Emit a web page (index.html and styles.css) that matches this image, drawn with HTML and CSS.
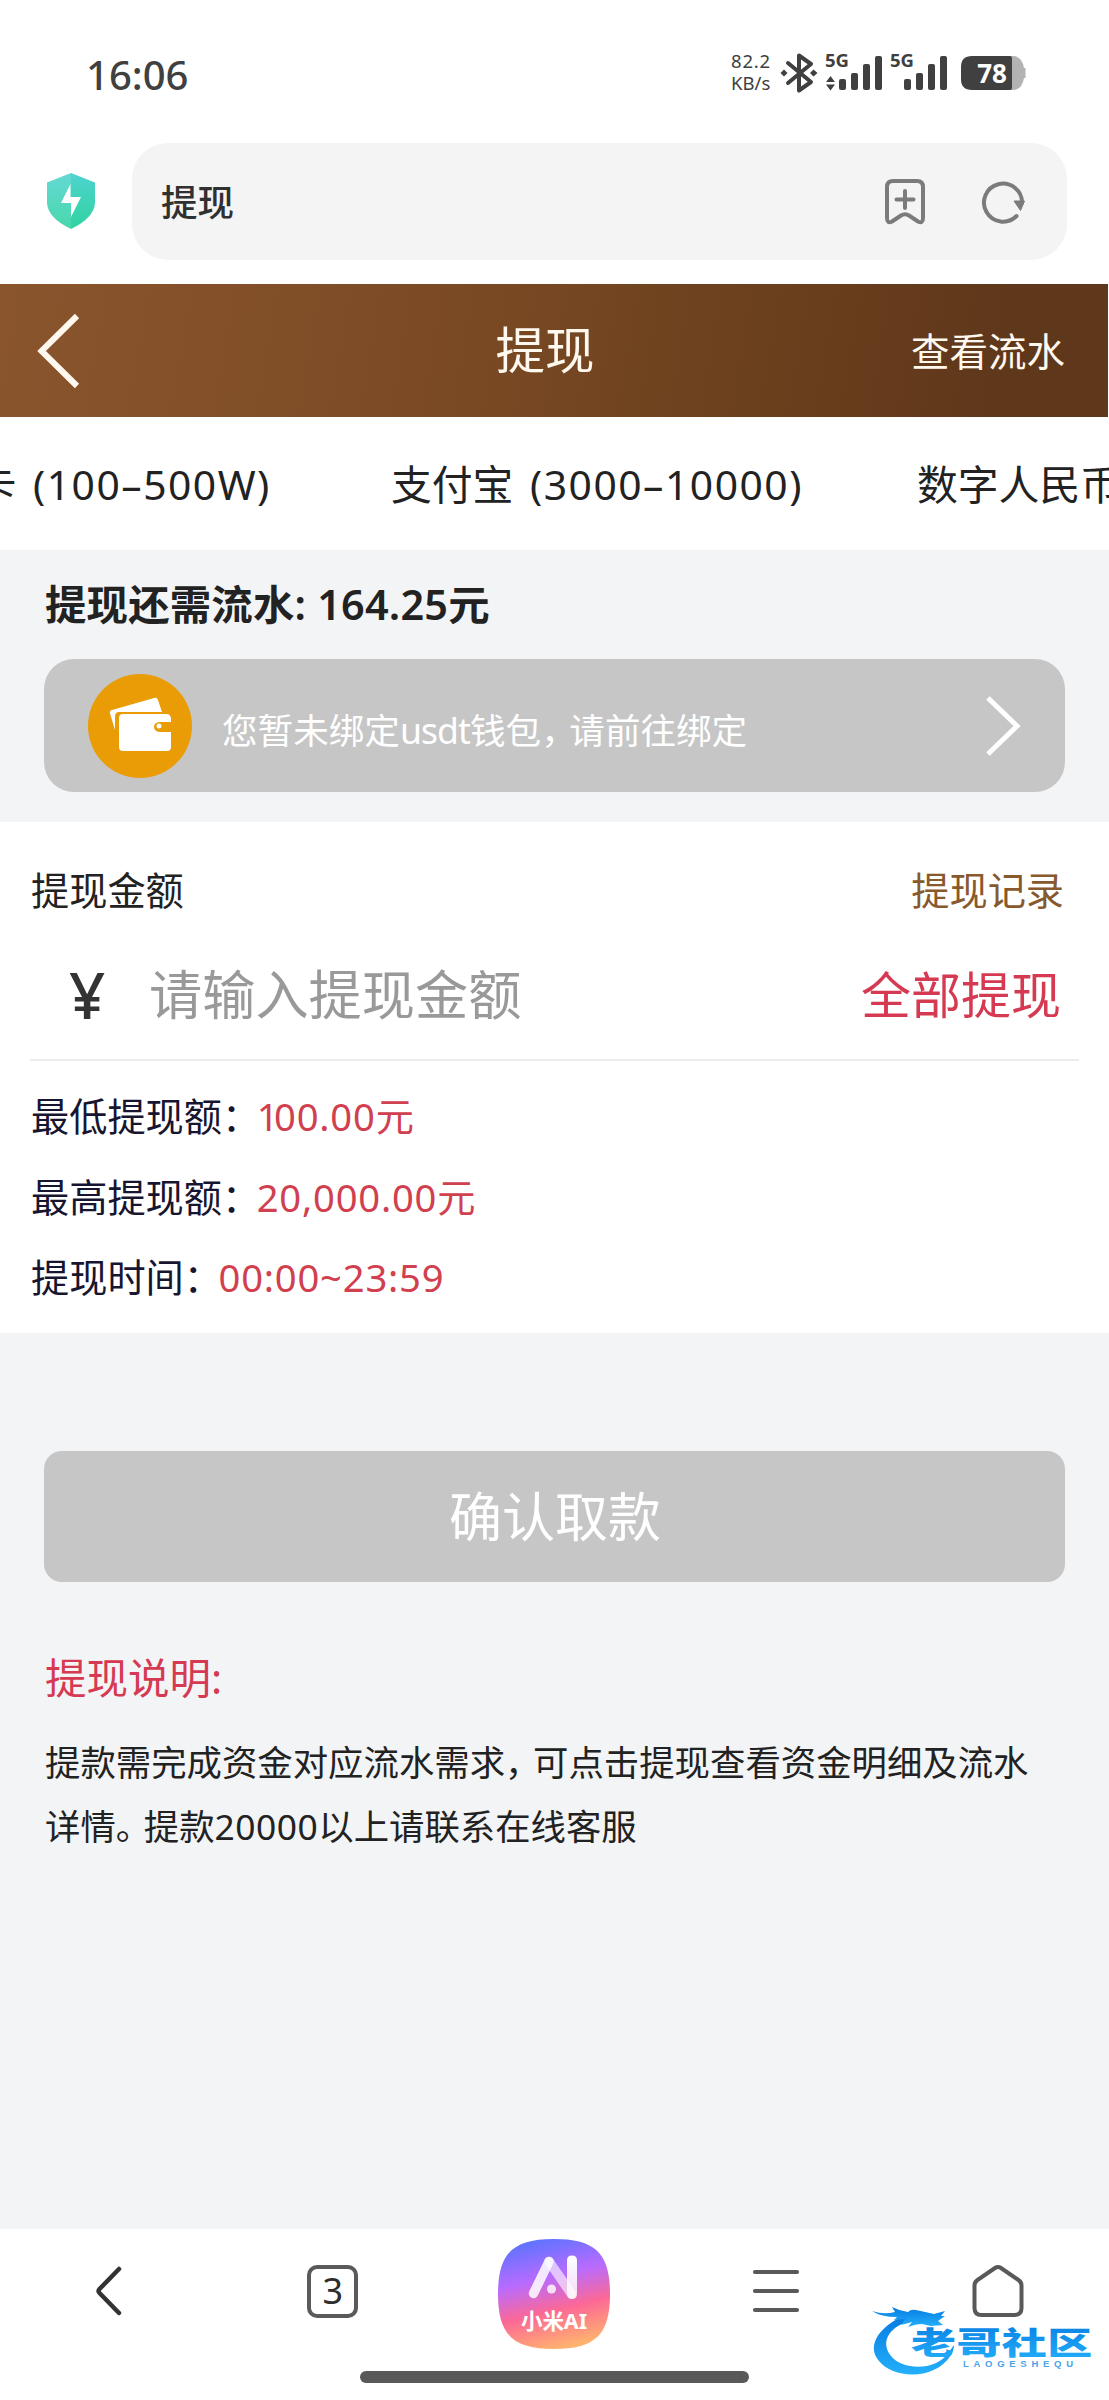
FILE: index.html
```html
<!DOCTYPE html>
<html lang="zh-CN">
<head>
<meta charset="utf-8">
<title>提现</title>
<link rel="stylesheet" href="styles.css">
</head>
<body>
<div class="phone">
  <div class="status">
    <span class="clock">16:06</span>
    <div class="indicators">
      <div class="speed"><span>82.2</span><span>KB/s</span></div>
      <svg class="status-icons" viewBox="0 0 248 44" width="248" height="44">
        <g fill="none" stroke="#404040" stroke-width="4" stroke-linejoin="round" stroke-linecap="round">
          <path d="M8 12 31 31 19 39.500V4.500L31 13 8 32"/>
        </g>
        <g fill="#404040">
          <path d="M0.500 22 4 18.500 7.500 22 4 25.500zM30 22l3.500-3.500L37.500 22l-4 3.500z"/>
          <text class="net" x="45" y="16">5G</text>
          <path d="M50.500 25 55 31H46zM46 33.500h9L50.500 39.500z"/>
          <rect x="59" y="28" width="7" height="11" rx="2"/><rect x="71" y="22" width="7" height="17" rx="2"/><rect x="83" y="13" width="7" height="26" rx="2"/><rect x="95" y="5" width="7" height="34" rx="2"/>
          <text class="net" x="110" y="16">5G</text>
          <rect x="124" y="28" width="7" height="11" rx="2"/><rect x="136" y="22" width="7" height="17" rx="2"/><rect x="148" y="13" width="7" height="26" rx="2"/><rect x="160" y="5" width="7" height="34" rx="2"/>
        </g>
        <path fill="#b3b3b3" d="M228 5h5q9 0 11 12h1.500v10H244q-2 12-11 12h-5z"/>
        <path fill="#404040" d="M192 5h38q2 0 2 2v30q0 2-2 2h-38q-11 0-11-11V16q0-11 11-11z"/>
        <text class="charge" x="212" y="31.500" text-anchor="middle">78</text>
      </svg>
    </div>
  </div>

  <div class="browser">
    <svg class="shield" viewBox="0 0 50 58" width="50" height="58">
      <defs><linearGradient id="sh" x1="0" y1="0" x2="0" y2="1"><stop offset="0" stop-color="#4fd3cf"/><stop offset="1" stop-color="#2fd3a0"/></linearGradient></defs>
      <path fill="url(#sh)" d="M25 1 49 10.500V31Q48 46 25 57 2 46 1 31V10.500z"/>
      <path fill="#fff" fill-opacity=".12" d="M25 1 1 10.500V31Q2 46 25 57z"/>
      <path fill="#fff" d="M24.500 12 15 31h10v14l10-20H24.500z"/>
    </svg>
    <div class="address">
      <span class="address-title">提现</span>
      <svg viewBox="0 0 42 48" width="42" height="48" fill="none" stroke="#7b7b7b" stroke-width="4" stroke-linecap="round" stroke-linejoin="round">
        <path d="M9 3h24q6 0 6 6v31q0 6-5 3.500l-9-6q-4-2.500-8 0l-9 6Q3 46 3 40V9q0-6 6-6z"/><path d="M21 13v17M12.500 21.500h17"/>
      </svg>
      <svg viewBox="0 0 44 44" width="44" height="44">
        <path d="M35.500 36A19 19 0 1 1 41 23" fill="none" stroke="#7b7b7b" stroke-width="4" stroke-linecap="round"/>
        <path d="M33 21h10.500L39.500 30.500z" fill="#7b7b7b" stroke="#7b7b7b" stroke-linejoin="round"/>
      </svg>
    </div>
  </div>

  <header class="topbar">
    <svg class="back" viewBox="0 0 48 80" width="48" height="80"><path d="M42 5 6.500 40 42 75" fill="none" stroke="#fff8ef" stroke-width="6"/></svg>
    <h1>提现</h1>
    <a class="flow">查看流水</a>
  </header>

  <nav class="tabs">
    <span class="tab">银行卡 <i class="num">(100–500W)</i></span>
    <span class="tab">支付宝 <i class="num">(3000–10000)</i></span>
    <span class="tab">数字人民币</span>
  </nav>

  <main>
    <section class="wallet">
      <p class="need">提现还需流水: 164.25元</p>
      <div class="bind">
        <svg viewBox="0 0 104 104" width="104" height="104">
          <circle cx="52" cy="52" r="52" fill="#e99c05"/>
          <path fill="#fff" d="M22 39.500Q21 37 24 36L66 24q3-1 4 2l4 12H31q-4 0-4 5v13z"/>
          <path fill="#fff" d="M35 40H78q5 0 5 5v3H73q-7 0-7 5t7 5H83V73q0 4-4 4H35q-4 0-4-4V44q0-4 4-4z"/>
          <circle cx="71" cy="52" r="2.500" fill="#fff"/>
        </svg>
        <span class="bind-text">您暂未绑定<i class="usdt">usdt</i>钱包<i class="comma">，</i>请前往绑定</span>
        <svg viewBox="0 0 40 64" width="40" height="64"><path d="M5 4 34 32 5 60" fill="none" stroke="#fff" stroke-width="5"/></svg>
      </div>
    </section>

    <section class="amount">
      <div class="amount-head"><span>提现金额</span><a>提现记录</a></div>
      <div class="amount-input">
        <span class="yen">¥</span>
        <span class="placeholder">请输入提现金额</span>
        <a class="all">全部提现</a>
      </div>
      <dl class="limits">
        <div><dt>最低提现额<i class="colon">：</i></dt><dd><i class="one">1</i>00.00元</dd></div>
        <div><dt>最高提现额<i class="colon">：</i></dt><dd>20,000.00元</dd></div>
        <div><dt>提现时间<i class="colon">：</i></dt><dd>00:00~23:59</dd></div>
      </dl>
    </section>

    <button class="confirm">确认取款</button>

    <section class="notes">
      <h2>提现说明:</h2>
      <p>提款需完成资金对应流水需求<i class="comma">，</i>可点击提现查看资金明细及流水<br>详情<i class="comma">。</i>提款<i class="sum">20000</i>以上请联系在线客服</p>
    </section>
  </main>

  <footer class="bottom">
    <div class="nav">
      <span><svg viewBox="0 0 30 52" width="30" height="52"><path d="M23 4 3.500 24q-2 2 0 4L23 48" fill="none" stroke="#333" stroke-width="4.500" stroke-linecap="round"/></svg></span>
      <span><b class="count">3</b></span>
      <span>
        <svg viewBox="0 0 112 112" width="112" height="112">
          <defs>
            <linearGradient id="ai" x1=".3" y1="0" x2=".55" y2="1"><stop offset="0" stop-color="#5a74ff"/><stop offset=".36" stop-color="#b86bff"/><stop offset=".66" stop-color="#fc6896"/><stop offset="1" stop-color="#ffb36e"/></linearGradient>
            <linearGradient id="leg" x1="0" y1="0" x2="0" y2="1"><stop offset="0" stop-color="#fff"/><stop offset="1" stop-color="#fff" stop-opacity=".75"/></linearGradient>
          </defs>
          <path fill="url(#ai)" d="M56 1C97 1 112 15 112 56S97 111 56 111 0 97 0 56 15 1 56 1z"/>
          <path d="M35.500 55.500 51 23.500" stroke="#fff" stroke-opacity=".85" stroke-width="9.500" stroke-linecap="round"/>
          <path d="M51 23.500 73.500 56" stroke="#fff" stroke-opacity=".6" stroke-width="9.500" stroke-linecap="round"/>
          <path d="M69 22.500q0-5 5-5t5 5V56q0 5-5 5t-5-5z" fill="url(#leg)"/>
          <circle cx="53.500" cy="51" r="4.500" fill="#fff" fill-opacity=".8"/>
          <text class="ai-name" x="56" y="91" text-anchor="middle" textLength="66">小米AI</text>
        </svg>
      </span>
      <span><svg viewBox="0 0 48 46" width="48" height="46"><path d="M3 4h42M3 23h42M3 42h42" fill="none" stroke="#595959" stroke-width="4.200" stroke-linecap="round"/></svg></span>
      <span><svg viewBox="0 0 52 54" width="52" height="54"><path d="M23 4q3-2 6 0L46.500 16q3 2 3 5.500V44q0 7-7 7H9.500q-7 0-7-7V21.500q0-3.500 3-5.500z" fill="none" stroke="#595959" stroke-width="4"/></svg></span>
    </div>
    <div class="pill"></div>
    <svg class="watermark" viewBox="0 0 224 76" width="224" height="76">
      <defs><linearGradient id="wm" x1="0" y1="0" x2="0" y2="1"><stop offset="0" stop-color="#067be2"/><stop offset="1" stop-color="#24b0fa"/></linearGradient></defs>
      <path fill="url(#wm)" d="M30 14C6 26-4 44 8 58c14 18 56 20 72-6 2-4 3-7 3-10l-5 7C66 68 32 68 20 53 8 38 20 22 42 17z"/>
      <path fill="url(#wm)" d="M1 8q12 4 23 1l-3-5q8 4 16 5 3-3 8-2l18 4 11-3-4 5h4l-7 5 5 4-12 1-9-2q-6 0-14 3l4-5-11 3 4-6-11 1 3-3Q10 14 1 8z"/>
      <text class="wm-cn" fill="url(#wm)" transform="translate(40 51) scale(1.45 1)" textLength="125">老哥社区</text>
      <text class="wm-en" x="92" y="64" textLength="110">LAOGESHEQU</text>
    </svg>
  </footer>
</div>
</body>
</html>
```
FILE: styles.css
```css
* { box-sizing: border-box; }
body {
  margin: 0;
  background: #fff;
  color: #222;
  font-family: "Noto Sans", "Noto Sans CJK SC", sans-serif;
}
i { font-style: normal; }
svg { display: block; flex: none; overflow: visible; }
h1, h2, p, dl, dd { margin: 0; font-weight: 400; }

.phone {
  width: 1109px;
  height: 2400px;
  display: flex;
  flex-direction: column;
  overflow: hidden;
}

.status {
  height: 143px;
  padding: 6px 81px 0 86px;
  display: flex;
  justify-content: space-between;
  color: #404040;
}
.clock {
  height: 137px;
  line-height: 137px;
  font-size: 40px;
  font-weight: 500;
}
.indicators { display: flex; padding-top: 45px; gap: 9px; }
.speed {
  display: flex;
  flex-direction: column;
  margin-top: -1px;
  font-size: 18.500px;
  line-height: 22px;
}
.speed span:first-child { letter-spacing: .8px; }
.net { font: 700 18.500px "Noto Sans", sans-serif; }
.charge { font: 700 26px "Noto Sans", sans-serif; fill: #fff; }

.browser {
  height: 141px;
  padding: 0 42px 0 46px;
  display: flex;
  align-items: flex-start;
  gap: 36px;
}
.shield { margin-top: 29px; }
.address {
  flex: 1;
  height: 117px;
  padding: 0 42px 0 29px;
  display: flex;
  align-items: center;
  border-radius: 36px;
  background: #f4f4f4;
}
.address-title { flex: 1; padding-bottom: 2px; font-size: 36.500px; font-weight: 500; color: #303030; }
.address svg + svg { margin-left: 55px; }

.topbar {
  height: 133px;
  margin-right: 1px;
  padding: 0 43px 0 35px;
  display: grid;
  grid-template-columns: 1fr auto 1fr;
  align-items: center;
  color: #fff8ef;
  background: linear-gradient(100deg, #8a552d 0%, #7c4b25 38%, #6b401d 68%, #5f371a 90%, #5f371a 100%);
}
.topbar h1 { padding: 0 10px 5px 0; font-size: 49.500px; }
.flow { justify-self: end; padding-bottom: 4px; font-size: 38.500px; }

.tabs {
  height: 133px;
  margin-left: -106px;
  padding-bottom: 3px;
  display: flex;
  align-items: center;
  white-space: pre;
  font-size: 40.800px;
}
.tab { flex: none; }
.tab:nth-child(1) { width: 497px; }
.tab:nth-child(2) { width: 526px; }
.tab .num { margin-left: 6px; letter-spacing: 1.500px; }

main { height: 1679px; background: #f3f4f6; }

.wallet { height: 272px; padding: 26px 44px 0; }
.need {
  padding-left: 1px;
  height: 56px;
  line-height: 56px;
  font-size: 41.400px;
  font-weight: 600;
  letter-spacing: .2px;
}
.bind {
  height: 133px;
  margin-top: 27px;
  padding: 0 42px 0 44px;
  display: flex;
  align-items: center;
  border-radius: 30px;
  background: #c6c6c6;
  color: #fff;
}
.bind-text { flex: 1; padding: 6px 0 0 30px; font-size: 35.600px; }
.usdt { letter-spacing: -.9px; }
.comma { letter-spacing: -.21em; }

.amount { height: 511px; padding: 38px 30px 0; background: #fff; }
.amount-head {
  padding: 0 15px 0 1px;
  display: flex;
  justify-content: space-between;
  height: 60px;
  line-height: 60px;
  font-size: 38.200px;
}
.amount-head a { color: #87592d; }
.amount-input {
  height: 141px;
  padding: 11px 18px 0 39px;
  display: flex;
  align-items: center;
  line-height: 60px;
  border-bottom: 2px solid #ececec;
}
.yen { width: 80px; font-size: 63.500px; font-weight: 500; color: #333; }
.placeholder { flex: 1; font-size: 53.200px; color: #999; }
.all { font-size: 50px; color: #d63a52; }
.limits {
  padding: 15px 0 0 1px;
  display: flex;
  flex-direction: column;
  font-size: 38.200px;
  line-height: 80.600px;
}
.limits div { display: flex; }
.limits dt { color: #17152f; }
.limits dd { color: #d0404f; letter-spacing: .8px; }
.limits .one { letter-spacing: -4.500px; }
.colon { letter-spacing: -.09em; }

.confirm {
  display: block;
  width: 1021px;
  height: 131px;
  margin: 118px 44px 0;
  padding: 0 0 0 1px;
  border: 0;
  border-radius: 18px;
  background: #c6c6c6;
  color: #fff;
  font: 400 53px/131px "Noto Sans", "Noto Sans CJK SC", sans-serif;
}

.notes { padding: 66px 0 0 45px; }
.notes h2 { height: 60px; line-height: 60px; font-size: 41.500px; color: #d63a52; }
.notes p { padding-top: 22px; font-size: 35.400px; line-height: 64px; white-space: nowrap; }
.sum { letter-spacing: .5px; }

.bottom { position: relative; height: 171px; background: #fff; }
.nav { height: 130px; display: grid; grid-template-columns: repeat(5, 1fr); align-items: center; justify-items: center; }
.nav span { margin-bottom: 6px; }
.nav span:nth-child(3) { margin-bottom: 0; }
.count {
  display: block;
  width: 51px;
  height: 53px;
  border: 4px solid #5a5a5a;
  border-radius: 10px;
  font-weight: 400;
  font-size: 36px;
  line-height: 44px;
  text-align: center;
  color: #2e2e2e;
}
.ai-name { font: 700 21.500px "Noto Sans", "Noto Sans CJK SC", sans-serif; fill: #fff; }
.pill { width: 389px; height: 12px; margin: 12px auto 0; border-radius: 6px; background: #595959; }
.watermark { position: absolute; left: 871px; top: 74px; }
.wm-cn { font: 900 31px "Noto Sans CJK SC", sans-serif; }
.wm-en { font: 700 9.500px "Liberation Sans", sans-serif; fill: #4aa4ea; }
```
